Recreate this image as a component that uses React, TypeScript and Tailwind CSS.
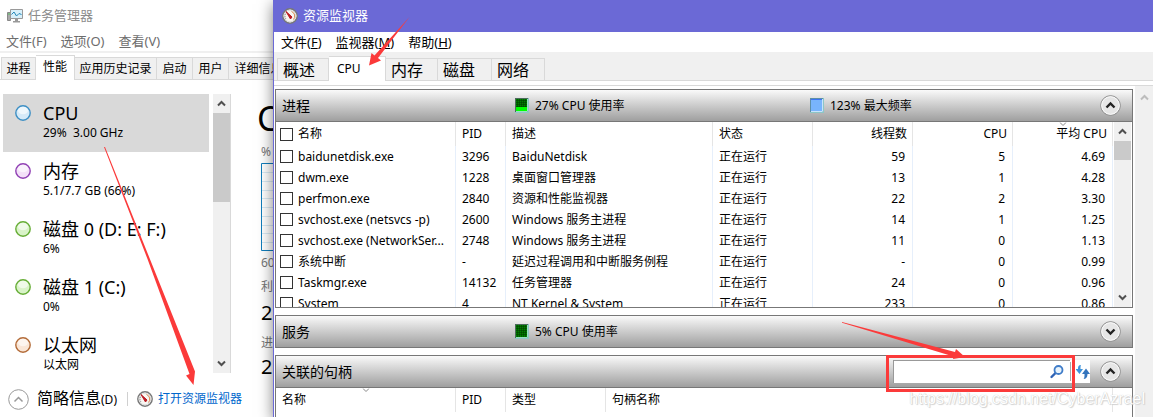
import clsx from "clsx";
import type { ReactNode } from "react";

interface Resource {
  name: string;
  detail: string;
  stroke: string;
  fill: string;
}

interface ProcessRow {
  name: string;
  pid: string;
  description: string;
  threads: string;
  cpu: string;
  average: string;
}

const resources: Resource[] = [
  { name: "CPU", detail: "29%  3.00 GHz", stroke: "#3d8fc4", fill: "#d5eaf8" },
  { name: "内存", detail: "5.1/7.7 GB (66%)", stroke: "#9040b4", fill: "#f3e0f8" },
  { name: "磁盘 0 (D: E: F:)", detail: "6%", stroke: "#66ad36", fill: "#d9f3c8" },
  { name: "磁盘 1 (C:)", detail: "0%", stroke: "#66ad36", fill: "#d9f3c8" },
  { name: "以太网", detail: "以太网", stroke: "#b36b38", fill: "#fae6d6" },
];

const processes: ProcessRow[] = [
  { name: "baidunetdisk.exe", pid: "3296", description: "BaiduNetdisk", threads: "59", cpu: "5", average: "4.69" },
  { name: "dwm.exe", pid: "1228", description: "桌面窗口管理器", threads: "13", cpu: "1", average: "4.28" },
  { name: "perfmon.exe", pid: "2840", description: "资源和性能监视器", threads: "22", cpu: "2", average: "3.30" },
  { name: "svchost.exe (netsvcs -p)", pid: "2600", description: "Windows 服务主进程", threads: "14", cpu: "1", average: "1.25" },
  { name: "svchost.exe (NetworkSer...", pid: "2748", description: "Windows 服务主进程", threads: "11", cpu: "0", average: "1.13" },
  { name: "系统中断", pid: "-", description: "延迟过程调用和中断服务例程", threads: "-", cpu: "0", average: "0.99" },
  { name: "Taskmgr.exe", pid: "14132", description: "任务管理器", threads: "24", cpu: "0", average: "0.96" },
  { name: "System", pid: "4", description: "NT Kernel & System", threads: "233", cpu: "0", average: "0.86" },
];

const managerTabs = [
  { label: "进程", width: "w-[35px]" },
  { label: "性能", width: "w-[39px]" },
  { label: "应用历史记录", width: "w-[82px]" },
  { label: "启动", width: "w-9" },
  { label: "用户", width: "w-9" },
  { label: "详细信息", width: "w-[60px]" },
];

const monitorTabs = [
  { label: "概述", width: "w-[52px]" },
  { label: "CPU", width: "w-[57px]" },
  { label: "内存", width: "w-[52px]" },
  { label: "磁盘", width: "w-[54px]" },
  { label: "网络", width: "w-[53px]" },
];

export default function App() {
  return (
    <main className="relative flex h-screen overflow-hidden bg-white font-['Noto_Sans','Noto_Sans_CJK_SC',sans-serif] text-xs text-black">
      <TaskManager />
      <ResourceMonitor />
      <svg aria-hidden className="pointer-events-none absolute top-0 left-0 h-[417px] w-[420px]" viewBox="0 0 420 417">
        <path d="M104 147L105 147L149.500 258L195 371.500L193.500 385L186 375.500L189.500 374L147.500 259Z" fill="#fb3a3a" />
        <path d="M409.500 17L378 58L381 60.500L369 65.500L371.500 53L374.500 55.500Z" fill="#fb3a3a" />
      </svg>
      <p className="pointer-events-none absolute right-2 bottom-2 font-['Liberation_Sans',sans-serif] text-base leading-5 text-white [text-shadow:0_0_1px_#bbb,1px_1px_1px_#d4d4d4]">
        https://blog.csdn.net/CyberAzrael
      </p>
    </main>
  );
}

function TaskManager() {
  return (
    <section className="flex w-[273px] shrink-0 flex-col overflow-hidden">
      <header className="flex h-[31px] shrink-0 items-center gap-[5px] pl-[7px] text-[13px] text-[#8c8c8c]">
        <MonitorIcon />
        <h1>任务管理器</h1>
      </header>
      <nav className="flex h-[22px] shrink-0 items-center gap-[14px] border-b-2 border-[#f0f0f0] pt-0.5 pl-1.5 text-[13px] text-[#6d6d6d]">
        <button type="button">文件(F)</button>
        <button type="button">选项(O)</button>
        <button type="button">查看(V)</button>
      </nav>
      <div className="flex h-[27px] shrink-0 items-end border-b border-[#d9d9d9] pl-px" role="tablist">
        {managerTabs.map((tab) => (
          <button
            aria-selected={tab.label === "性能"}
            className={clsx(
              "shrink-0 border-t border-r border-[#d9d9d9] text-center whitespace-nowrap",
              tab.width,
              tab.label === "性能" ? "-mb-px h-[25px] bg-white pb-0.5" : "h-[22px] bg-[#f0f0f0]",
              tab.label === "进程" && "border-l",
            )}
            key={tab.label}
            role="tab"
            type="button"
          >
            {tab.label}
          </button>
        ))}
      </div>

      <div className="mt-[14px] flex min-h-0 flex-1">
        <ul className="ml-[3px] w-[206px] shrink-0 overflow-hidden">
          {resources.map((resource, index) => (
            <li
              className={clsx("flex h-[58px] items-start gap-3 pt-[7px] pl-3", index === 0 && "bg-[#d9d9d9]")}
              key={resource.name}
            >
              <svg aria-hidden className="mt-1 h-4 w-4 shrink-0" viewBox="0 0 16 16">
                <circle cx="8" cy="8" fill={resource.fill} r="7.200" stroke={resource.stroke} strokeWidth="1.400" />
                <ellipse cx="8" cy="5.500" fill="#fff" fillOpacity=".6" rx="5" ry="3.800" />
              </svg>
              <div className="whitespace-pre">
                <h2 className="text-lg leading-6">{resource.name}</h2>
                <p className="leading-4">{resource.detail}</p>
              </div>
            </li>
          ))}
        </ul>
        <ScrollBar className="ml-1 w-[18px] border-r border-[#d9d9d9]" thumb="h-[89px]" />
        <div className="ml-[30px] w-[60px] shrink-0 whitespace-nowrap text-[#777]">
          <h2 className="-ml-1 h-[50px] text-[34px] leading-[48px] text-black">C</h2>
          <p className="h-[19px] leading-4">%</p>
          <svg aria-hidden className="h-[88px] w-[60px]" viewBox="0 0 60 88">
            <path d="M1 9.500H60M1 18.500H60M1 27.500H60M1 35.500H60M1 44.500H60M1 53.500H60M1 62.500H60M1 70.500H60M1 79.500H60" stroke="#d9eaf4" />
            <path d="M60 .5H.5V87.500H60" fill="none" stroke="#117dbb" />
          </svg>
          <p className="h-7 leading-6">60</p>
          <p className="h-4 leading-4">利</p>
          <p className="h-10 text-xl leading-9 text-black">2</p>
          <p className="h-4 leading-4">进</p>
          <p className="text-xl leading-8 text-black">2</p>
        </div>
      </div>

      <footer className="mt-2 flex h-9 shrink-0 items-center pl-2">
        <button className="flex items-center gap-2 leading-6" type="button">
          <CircleChevron plain />
          <span>
            <span className="text-base">简略信息</span>(D)
          </span>
        </button>
        <span className="mr-[9px] ml-2.5 h-[14px] w-px bg-[#d0d0d0]" />
        <a className="flex items-center gap-[5px] whitespace-nowrap text-[#0066cc]" href="#monitor">
          <GaugeIcon />
          打开资源监视器
        </a>
      </footer>
    </section>
  );
}

function ResourceMonitor() {
  return (
    <section
      className="relative flex min-w-0 flex-1 flex-col border-l border-[#6b69d6] bg-white shadow-[0_4px_14px_rgba(0,0,0,0.5)]"
      id="monitor"
    >
      <header className="flex h-8 shrink-0 items-center gap-[5px] bg-[#6b69d6] pl-2 text-[13px] text-white">
        <GaugeIcon />
        <h1>资源监视器</h1>
      </header>
      <nav className="flex h-5 shrink-0 items-center gap-[14px] pt-0.5 pl-[7px] text-[13px]">
        <MenuButton hotkey="F" label="文件" />
        <MenuButton hotkey="M" label="监视器" />
        <MenuButton hotkey="H" label="帮助" />
      </nav>
      <div className="flex h-[29px] shrink-0 items-end border-b border-[#d9d9d9] bg-[#f0f0f0] pl-[3px]" role="tablist">
        {monitorTabs.map((tab) => (
          <button
            aria-selected={tab.label === "CPU"}
            className={clsx(
              "border-t border-r border-[#d9d9d9] text-left whitespace-nowrap",
              tab.width,
              tab.label === "CPU"
                ? "-mb-px h-[25px] bg-white pl-2 text-xs"
                : "h-[22px] pl-[5px] text-base leading-5",
              tab.label === "概述" && "border-l",
            )}
            key={tab.label}
            role="tab"
            type="button"
          >
            {tab.label}
          </button>
        ))}
      </div>
      <div className="h-[5px] shrink-0 border-b border-[#d9d9d9]" />

      <div className="flex min-h-0 flex-1">
        <div className="flex min-w-0 flex-1 flex-col gap-[7px] pt-[3px] pr-0.5 pl-px">
          <div className="flex h-[219px] shrink-0 flex-col border border-[#777]">
            <PanelHeader title="进程">
              <Metric className="w-[295px]" color="green" label="27% CPU 使用率" level={5} />
              <Metric color="blue" label="123% 最大频率" level={12} />
            </PanelHeader>
            <div className="flex min-h-0 flex-1 overflow-hidden border-t border-[#777]">
              <ProcessTable />
              <ScrollBar className="mr-px ml-px w-[17px]" thumb="h-[19px]" />
            </div>
          </div>

          <div className="shrink-0 border border-[#777]">
            <PanelHeader title="服务" collapsed>
              <Metric color="green" label="5% CPU 使用率" level={1} />
            </PanelHeader>
          </div>

          <div className="flex min-h-0 flex-1 flex-col border border-b-0 border-[#777]">
            <PanelHeader title="关联的句柄">
              <SearchBox />
            </PanelHeader>
            <HandleTable />
          </div>
        </div>
        <div className="w-[18px] shrink-0 bg-[#f0f0f0] pt-2">
          <Chevron className="mx-auto text-[#bcbcbc]" />
        </div>
      </div>
    </section>
  );
}

function MenuButton({ label, hotkey }: { label: string; hotkey: string }) {
  return (
    <button type="button">
      {label}(<span className="underline">{hotkey}</span>)
    </button>
  );
}

interface PanelHeaderProps {
  title: string;
  collapsed?: boolean;
  children: ReactNode;
}

function PanelHeader({ title, collapsed, children }: PanelHeaderProps) {
  return (
    <div className="flex h-[31px] shrink-0 items-center bg-linear-to-b from-[#fafafa] to-[#9f9f9f] pr-[11px] pl-1.5">
      <h2 className="w-[233px] shrink-0 text-sm">{title}</h2>
      <div className="flex min-w-0 flex-1 items-center">{children}</div>
      <button aria-label={title} type="button">
        <CircleChevron down={collapsed} />
      </button>
    </div>
  );
}

interface MetricProps {
  label: string;
  color: "green" | "blue";
  level: number;
  className?: string;
}

function Metric({ label, color, level, className }: MetricProps) {
  const green = color === "green";
  return (
    <div className={clsx("flex items-center gap-1.5", className)}>
      <svg aria-hidden className="h-[15px] w-[14px]" viewBox="0 0 14 15">
        <path d="M0 0H14V15H0Z" fill="#8cc6c6" />
        <path d="M0 0H13V14H0Z" fill={green ? "#4c6b5c" : "#5d8fa8"} />
        <path d="M1 1H12V13H1Z" fill={green ? "#008000" : "#3c74f4"} />
        {green && (
          <path
            d="M2.500 1V13M4.500 1V13M6.500 1V13M8.500 1V13M10.500 1V13M1 2.500H12M1 4.500H12M1 6.500H12M1 8.500H12M1 10.500H12"
            stroke="#003c00"
            strokeOpacity=".55"
          />
        )}
        <rect fill={green ? "#00ff00" : "#78b4fc"} height={level} width="11" x="1" y={14 - level} />
        <path d="M1 13.500H12.500V1" fill="none" stroke={green ? "#9ae0c0" : "#c8e4fc"} />
      </svg>
      {label}
    </div>
  );
}

function ProcessTable() {
  return (
    <table className="h-fit min-w-0 flex-1 table-fixed border-separate border-spacing-0">
      <colgroup>
        <col className="w-[180px]" />
        <col className="w-[50px]" />
        <col />
        <col className="w-[100px]" />
        <col className="w-[100px]" />
        <col className="w-[100px]" />
        <col className="w-[100px]" />
      </colgroup>
      <thead>
        <tr className="h-6 text-left *:border-r *:border-[#e5e5e5] *:p-0 *:font-normal">
          <th>
            <label className="flex items-center gap-[5px] pl-1">
              <CheckBox />
              名称
            </label>
          </th>
          <th>
            <span className="pl-1.5">PID</span>
          </th>
          <th>
            <span className="pl-1.5">描述</span>
          </th>
          <th>
            <span className="pl-1.5">状态</span>
          </th>
          <th className="text-right">
            <span className="pr-[5px]">线程数</span>
          </th>
          <th className="text-right">
            <span className="pr-[5px]">CPU</span>
          </th>
          <th className="relative text-right">
            <SortMark />
            <span className="pr-[5px]">平均 CPU</span>
          </th>
        </tr>
      </thead>
      <tbody>
        {processes.map((process) => (
          <tr className="h-[21px] whitespace-nowrap *:border-r *:border-[#e6effb] *:p-0" key={process.name}>
            <td>
              <label className="flex items-center gap-[5px] pl-1">
                <CheckBox />
                {process.name}
              </label>
            </td>
            <td>
              <span className="pl-1.5">{process.pid}</span>
            </td>
            <td>
              <span className="pl-1.5">{process.description}</span>
            </td>
            <td>
              <span className="pl-1.5">正在运行</span>
            </td>
            <td className="text-right">
              <span className="pr-[7px]">{process.threads}</span>
            </td>
            <td className="text-right">
              <span className="pr-[7px]">{process.cpu}</span>
            </td>
            <td className="text-right">
              <span className="pr-[7px]">{process.average}</span>
            </td>
          </tr>
        ))}
      </tbody>
    </table>
  );
}

function HandleTable() {
  return (
    <div className="border-t border-[#777] pr-[19px]">
      <table className="w-full table-fixed border-separate border-spacing-0">
        <colgroup>
          <col className="w-[180px]" />
          <col className="w-[50px]" />
          <col className="w-[100px]" />
          <col />
        </colgroup>
        <thead>
          <tr className="h-6 text-left *:border-r *:border-[#e5e5e5] *:p-0 *:font-normal">
            <th className="relative">
              <SortMark />
              <span className="pl-1.5">名称</span>
            </th>
            <th>
              <span className="pl-1.5">PID</span>
            </th>
            <th>
              <span className="pl-1.5">类型</span>
            </th>
            <th>
              <span className="pl-1.5">句柄名称</span>
            </th>
          </tr>
        </thead>
      </table>
    </div>
  );
}

function SearchBox() {
  return (
    <div className="relative mr-[10px] ml-auto flex h-[23px] items-center bg-white">
      <input
        aria-label="关联的句柄"
        className="h-[23px] w-[154px] border-t border-l border-[#999] bg-white px-1 outline-none"
        type="text"
      />
      <button aria-label="搜索" className="flex h-[23px] w-[23px] items-center border-t border-[#999] pl-0.5" type="button">
        <svg className="h-4 w-4" fill="none" viewBox="0 0 16 16">
          <path d="M7 8.500L2.500 13" stroke="#2f62b4" strokeLinecap="round" strokeWidth="2.400" />
          <circle cx="9.500" cy="6" fill="#e8f3fc" r="4" stroke="#3f7cc8" strokeWidth="1.800" />
        </svg>
      </button>
      <button aria-label="刷新" className="h-[19px] border-l border-[#aaa] pl-[5px]" type="button">
        <svg className="h-4 w-[14px]" viewBox="0 0 14 16">
          <path d="M5 1C2.500 1 2 2.500 2 5H-.5L3.500 10L7 5H4.500C4.500 3 4.500 2 5 1Z" fill="#3f94dc" />
          <path d="M7.500 15C10 15 11.500 13.500 11.500 10H14L10 4.500L6 10H8.500C8.500 12.500 8.500 14 7.500 15Z" fill="#3474bc" />
        </svg>
      </button>
      <span className="pointer-events-none absolute -top-[5px] -left-[7px] h-[37px] w-[189px] border-[3px] border-[#fb3a3a]" />
      <svg aria-hidden className="pointer-events-none absolute -top-[39px] -left-[52px] h-[40px] w-[124px]" viewBox="0 0 124 40">
        <path d="M1 1L114 31L115 28L124 36L112 38L112.500 35.500L1 1.800Z" fill="#fb3a3a" />
      </svg>
    </div>
  );
}

function CheckBox() {
  return <input className="h-[13px] w-[13px] shrink-0 appearance-none border border-[#333] bg-white" type="checkbox" />;
}

function SortMark() {
  return (
    <svg aria-hidden className="absolute top-0 left-1/2 h-1 w-[7px] -translate-x-1/2" viewBox="0 0 7 4">
      <path d="M.5 .5L3.500 3.500L6.500 .5" fill="none" stroke="#888" />
    </svg>
  );
}

function Chevron({ down, className }: { down?: boolean; className?: string }) {
  return (
    <svg aria-hidden className={clsx("h-[7px] w-[9px]", className)} viewBox="0 0 9 7">
      <path
        d={down ? "M1 1.500L4.500 5L8 1.500" : "M1 5.500L4.500 2L8 5.500"}
        fill="none"
        stroke="currentColor"
        strokeWidth="2"
      />
    </svg>
  );
}

function ScrollBar({ className, thumb }: { className: string; thumb: string }) {
  return (
    <div className={clsx("flex shrink-0 flex-col items-center bg-[#f0f0f0] text-[#505050]", className)}>
      <span className="flex h-[19px] shrink-0 items-center">
        <Chevron />
      </span>
      <span className={clsx("w-full shrink-0 bg-[#cacaca]", thumb)} />
      <span className="mt-auto flex h-[19px] shrink-0 items-center">
        <Chevron down />
      </span>
    </div>
  );
}

function CircleChevron({ down, plain }: { down?: boolean; plain?: boolean }) {
  return (
    <svg aria-hidden className="h-[21px] w-[21px]" fill="none" viewBox="0 0 21 21">
      <circle cx="10.500" cy="10.500" fill={plain ? "#fff" : "#e6e6e6"} r="9.800" stroke={plain ? "#999" : "#888"} />
      {!plain && <circle cx="10.500" cy="10.500" r="8.800" stroke="#fafafa" />}
      <path
        d={down ? "M6.500 8.500L10.500 12.500L14.500 8.500" : "M6.500 12.500L10.500 8.500L14.500 12.500"}
        stroke={plain ? "#999" : "#222"}
        strokeWidth={plain ? 1.5 : 2.4}
      />
    </svg>
  );
}

function GaugeIcon() {
  return (
    <svg aria-hidden className="h-4 w-4 shrink-0" fill="none" viewBox="0 0 16 16">
      <circle cx="8" cy="8" fill="#f8f6f2" r="7.200" stroke="#777" strokeWidth="1.400" />
      <circle cx="8" cy="8" r="5.800" stroke="#ddd" />
      <path d="M4 11A5 5 0 0 1 4.500 4.500" stroke="#777" strokeDasharray="1 1" />
      <path d="M9.500 3.500A5 5 0 0 1 11.500 11.500" stroke="#d88850" />
      <path d="M4 3.500L10 9L8.500 11Z" fill="#c41820" stroke="#b81c24" />
    </svg>
  );
}

function MonitorIcon() {
  return (
    <svg aria-hidden className="h-[15px] w-4 shrink-0" fill="none" viewBox="0 0 16 15">
      <path d="M.5 4.500H3.500V12.500H.5Z" fill="#aaa" stroke="#888" />
      <path d="M1 6H3" stroke="#56c060" />
      <path d="M3.500 1.500H15.500V10.500H3.500Z" fill="#d8f0fa" stroke="#999" />
      <path d="M4.500 6.500L7 4L9.500 8L12 5.500L14.500 6.500" stroke="#2387b8" />
      <path d="M8 11H11V13H13V14.500H6V13H8Z" fill="#999" />
    </svg>
  );
}
